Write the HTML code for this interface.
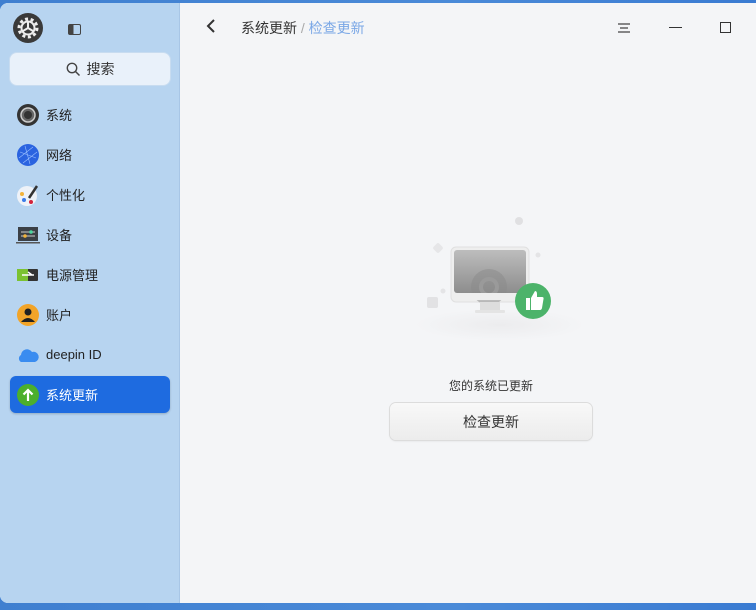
<!DOCTYPE html>
<html><head><meta charset="utf-8"><style>
*{margin:0;padding:0;box-sizing:border-box}
body{width:756px;height:610px;overflow:hidden;background:linear-gradient(90deg,#3f7fd0,#4a8ad8 60%,#3a7bd2);font-family:"Liberation Sans","Noto Sans CJK SC",sans-serif;position:relative}
.win{position:absolute;left:0;top:3px;width:756px;height:600px;background:#f4f5f7;border-radius:8px 0 0 8px;overflow:hidden}
.side{position:absolute;left:0;top:0;width:180px;height:600px;background:#b7d4f0;border-right:1px solid #a8c6e6}
.search{position:absolute;left:10px;top:50px;width:160px;height:32px;background:#e9f1fa;border-radius:7px;box-shadow:0 0 0 1px #c8dcf0;font-size:14px;color:#333;display:flex;align-items:center;justify-content:center;gap:6px}
.item{position:absolute;left:10px;width:160px;height:37px;display:flex;align-items:center;font-size:13px;color:#222;padding-left:6px}
.item .ic{width:24px;height:24px;margin-right:6px;flex:none}
.sel{background:#1e6be0;color:#fff;border-radius:6px;box-shadow:0 1px 2px rgba(0,0,0,.2)}
.crumb{position:absolute;left:241px;top:15px;font-size:14px;color:#333}
.crumb span{color:#7aa7e6}
.btn{position:absolute;left:390px;top:400px;width:202px;height:37px;border-radius:6px;background:linear-gradient(#f8f8f8,#ececec);box-shadow:0 0 0 1px #dcdcdc,0 1px 2px rgba(0,0,0,.1);font-size:14px;color:#333;display:flex;align-items:center;justify-content:center}
</style></head><body>
<div class="win">
<div class="side">
 <svg style="position:absolute;left:13px;top:10px" width="30" height="30" viewBox="0 0 30 30"><circle cx="15" cy="15" r="15" fill="#3a3a3a"/><circle cx="15" cy="15" r="9" fill="none" stroke="#eee" stroke-width="3" stroke-dasharray="3 2.6"/><circle cx="15" cy="15" r="6.5" fill="none" stroke="#eee" stroke-width="2"/><path d="M15 15V9M15 15l5 3M15 15l-5 3" stroke="#eee" stroke-width="2"/></svg>
 <div style="position:absolute;left:68px;top:21px;width:13px;height:11px;border:1.5px solid #444;border-radius:2px;background:linear-gradient(90deg,#444 40%,transparent 40%)"></div>
 <div class="search"><svg width="15" height="15" viewBox="0 0 15 15"><circle cx="6" cy="6" r="4.7" fill="none" stroke="#444" stroke-width="1.4"/><path d="M9.5 9.5L13.5 13.5" stroke="#444" stroke-width="1.5"/></svg>搜索</div>
 <div class="item" style="top:93px"><svg class="ic" viewBox="0 0 24 24"><circle cx="12" cy="12" r="11" fill="#333"/><circle cx="12" cy="12" r="7" fill="#666" stroke="#ccc" stroke-width="1.5"/><circle cx="12" cy="12" r="4" fill="#333"/></svg>系统</div>
 <div class="item" style="top:133px"><svg class="ic" viewBox="0 0 24 24"><circle cx="12" cy="12" r="11" fill="#2a63e0"/><path d="M4 9L20 15M9 3L14 21M3 15L17 4M7 20L21 9" stroke="#9cc0ff" stroke-width=".6"/></svg>网络</div>
 <div class="item" style="top:173px"><svg class="ic" viewBox="0 0 24 24"><circle cx="11" cy="13" r="10" fill="#eef2f8"/><circle cx="6" cy="11" r="2" fill="#f2b33a"/><circle cx="8" cy="17" r="2" fill="#3b7be8"/><circle cx="15" cy="19" r="2" fill="#d2233c"/><path d="M13 15L21 3" stroke="#333" stroke-width="2.5"/></svg>个性化</div>
 <div class="item" style="top:213px"><svg class="ic" viewBox="0 0 24 24"><rect x="2" y="4" width="20" height="14" fill="#3b4046"/><rect x="0" y="19" width="24" height="1.5" fill="#555"/><path d="M5 9H19M5 13H19" stroke="#ccc"/><circle cx="15" cy="9" r="1.8" fill="#4dd6a0"/><circle cx="9" cy="13" r="1.8" fill="#f2b33a"/></svg>设备</div>
 <div class="item" style="top:253px"><svg class="ic" viewBox="0 0 24 24"><rect x="1" y="6" width="21" height="12" rx="1" fill="#333"/><rect x="1" y="6" width="11" height="12" fill="#7bc232"/><path d="M6 12H18M12 9L16 12" stroke="#fff" stroke-width="1.5"/></svg>电源管理</div>
 <div class="item" style="top:293px"><svg class="ic" viewBox="0 0 24 24"><circle cx="12" cy="12" r="11" fill="#f2a428"/><circle cx="12" cy="9" r="3.5" fill="#222"/><path d="M5 19Q12 11 19 19Z" fill="#222"/></svg>账户</div>
 <div class="item" style="top:333px"><svg class="ic" viewBox="0 0 24 24"><path d="M5 19A4 4 0 0 1 5 12A6 6 0 0 1 16 9A5 5 0 0 1 19 19Z" fill="#3a8cf0"/></svg>deepin ID</div>
 <div class="item sel" style="top:373px"><svg class="ic" viewBox="0 0 24 24"><circle cx="12" cy="12" r="11" fill="#4caf2c"/><path d="M12 18V7M7.5 11.5L12 7L16.5 11.5" stroke="#fff" stroke-width="2.2" fill="none"/></svg>系统更新</div>
</div>
<svg style="position:absolute;left:204px;top:14px" width="14" height="18" viewBox="0 0 14 18"><path d="M10 3L4 9L10 15" stroke="#333" stroke-width="2" fill="none"/></svg>
<div class="crumb">系统更新 <span style="color:#aaa">/</span> <span>检查更新</span></div>
<svg style="position:absolute;left:617px;top:18px" width="14" height="14"><path d="M1 3H13M3 7H11M1 11H13" stroke="#444" stroke-width="1.2"/></svg>
<div style="position:absolute;left:669px;top:24px;width:13px;height:1.3px;background:#333"></div>
<div style="position:absolute;left:720px;top:19px;width:11px;height:11px;border:1.3px solid #333"></div>
<svg style="position:absolute;left:400px;top:197px" width="200" height="140" viewBox="0 0 200 140">
 <defs><linearGradient id="g" x1="0" y1="0" x2="0" y2="1"><stop offset="0" stop-color="#bdbdbd"/><stop offset="1" stop-color="#8d8d8d"/></linearGradient><radialGradient id="s"><stop offset="0" stop-color="#ececee"/><stop offset="1" stop-color="#f4f5f7"/></radialGradient></defs>
 <ellipse cx="100" cy="125" rx="85" ry="16" fill="url(#s)"/>
 <circle cx="119" cy="21" r="4" fill="#e0e0e2"/><rect x="34" y="44" width="8" height="8" rx="2" transform="rotate(45 38 48)" fill="#e6e6e8"/>
 <circle cx="138" cy="55" r="2.5" fill="#e4e4e6"/><circle cx="43" cy="91" r="2.5" fill="#e4e4e6"/><rect x="27" y="97" width="11" height="11" rx="2" fill="#e2e2e4"/>
 <rect x="51" y="47" width="78" height="55" rx="5" fill="#eee" stroke="#e0e0e0"/>
 <rect x="54" y="50" width="72" height="43" rx="3" fill="url(#g)"/>
 <circle cx="89" cy="87" r="18" fill="#8a8a8a" opacity=".5"/><circle cx="89" cy="87" r="8" fill="none" stroke="#9a9a9a" stroke-width="4"/>
 <rect x="54" y="93" width="72" height="7" fill="#eee"/>
 <rect x="80" y="102" width="20" height="8" fill="#ddd"/><rect x="75" y="110" width="30" height="3" rx="1" fill="#e4e4e4"/>
 <circle cx="133" cy="101" r="18" fill="#4cb36a"/><path d="M126 98h4v12h-4zM131 98l4-7q2 0 2 3v3h5q2 0 1.5 2l-1.5 9q-.5 2-2 2h-9z" fill="#fff"/>
</svg>
<div style="position:absolute;left:390px;width:202px;top:374px;text-align:center;font-size:12px;color:#333">您的系统已更新</div>
<div class="btn">检查更新</div>
</div>
</body></html>
